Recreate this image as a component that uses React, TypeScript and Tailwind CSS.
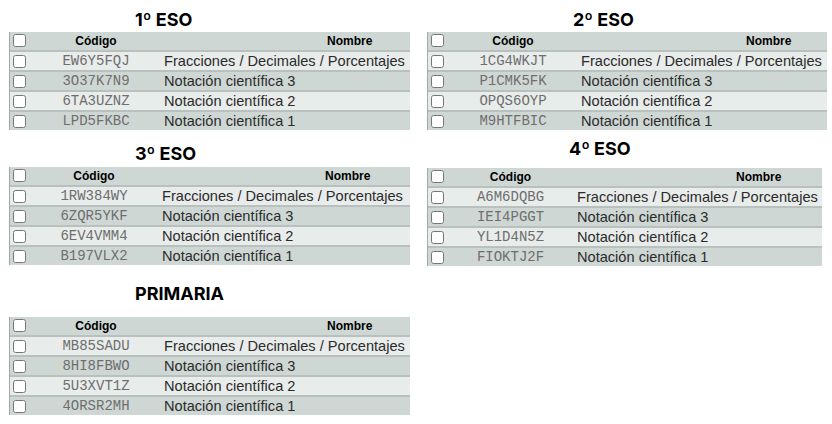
import React from 'react';

interface Row {
    code: string;
    name: string;
}

interface TableSpec {
    title: string;
    titleClass: string;
    wrapClass: string;
    tableClass: string;
    widthClass: string;
    codeClass: string;
    nombreClass: string;
    rows: Row[];
}

const names = ['Fracciones / Decimales / Porcentajes', 'Notación científica 3', 'Notación científica 2', 'Notación científica 1'];

const mk = (codes: string[]): Row[] => codes.map((code, i) => ({ code, name: names[i] }));

const Check: React.FC = () => (
    <input type="checkbox" className="m-0 ml-[3px] h-[13px] w-[13px] shrink-0" />
);

const CodeTable: React.FC<{ t: TableSpec }> = ({ t }) => (
    <div className={t.wrapClass}>
        <h2 className={`h-[22px] text-[18px] leading-[22px] font-bold text-black font-['Inter',sans-serif] ${t.titleClass}`}>
            {t.title}
        </h2>
        <div className={`${t.tableClass} ${t.widthClass} border-l border-[#a3aba9] font-['Liberation_Sans',Arial,sans-serif]`}>
            <div className="flex h-[18px] items-start bg-[#ced7d4] pt-[2px]">
                <Check />
                <div className={`${t.codeClass} shrink-0 text-center text-[12px] font-bold leading-[14px] text-black`}>Código</div>
                <div className={`${t.nombreClass} text-[12px] font-bold leading-[14px] text-black`}>Nombre</div>
            </div>
            {t.rows.map((r, i) => (
                <div
                    key={i}
                    className={`flex h-[20px] items-center border-t-2 border-[#b9c1bf] ${i % 2 === 0 ? 'bg-[#e8ecea]' : 'bg-[#ced7d4]'}`}
                >
                    <Check />
                    <div className={`${t.codeClass} shrink-0 text-center font-['Liberation_Mono','Courier_New',monospace] text-[14px] leading-[18px] text-[#6e6e6e]`}>
                        {r.code}
                    </div>
                    <div className="text-[14.6px] leading-[18px] whitespace-nowrap text-[#2b2b2b]">{r.name}</div>
                </div>
            ))}
        </div>
    </div>
);

const tables: Record<string, TableSpec> = {
    t1: {
        title: '1º ESO', titleClass: 'pl-[126px]', wrapClass: '', tableClass: 'mt-[1px]', widthClass: 'w-[401px]',
        codeClass: 'w-[138px] pl-[2px]', nombreClass: 'pl-[163px]', rows: mk(['EW6Y5FQJ', '3O37K7N9', '6TA3UZNZ', 'LPD5FKBC']),
    },
    t2: {
        title: '2º ESO', titleClass: 'pl-[146px]', wrapClass: '', tableClass: 'mt-[1px]', widthClass: 'w-[400px]',
        codeClass: 'w-[137px] pl-[1px]', nombreClass: 'pl-[165px]', rows: mk(['1CG4WKJT', 'P1CMK5FK', 'OPQS6OYP', 'M9HTFBIC']),
    },
    t3: {
        title: '3º ESO', titleClass: 'pl-[126px]', wrapClass: 'mt-[13px]', tableClass: 'mt-[2px]', widthClass: 'w-[401px]',
        codeClass: 'w-[136px]', nombreClass: 'pl-[163px]', rows: mk(['1RW384WY', '6ZQR5YKF', '6EV4VMM4', 'B197VLX2']),
    },
    t4: {
        title: '4º ESO', titleClass: 'pl-[142px]', wrapClass: 'mt-[8px]', tableClass: 'mt-[8px]', widthClass: 'w-[395px]',
        codeClass: 'w-[133px]', nombreClass: 'pl-[159px]', rows: mk(['A6M6DQBG', 'IEI4PGGT', 'YL1D4N5Z', 'FIOKTJ2F']),
    },
    t5: {
        title: 'PRIMARIA', titleClass: 'pl-[126px]', wrapClass: 'mt-[18px]', tableClass: 'mt-[12px]', widthClass: 'w-[401px]',
        codeClass: 'w-[138px] pl-[2px]', nombreClass: 'pl-[163px]', rows: mk(['MB85SADU', '8HI8FBWO', '5U3XVT1Z', '4ORSR2MH']),
    },
};

export default function App() {
    return (
        <div className="flex h-[424px] w-[832px] gap-[17px] bg-white pt-[9px] pl-[9px]">
            <div className="flex flex-col">
                <CodeTable t={tables.t1} />
                <CodeTable t={tables.t3} />
                <CodeTable t={tables.t5} />
            </div>
            <div className="flex flex-col">
                <CodeTable t={tables.t2} />
                <CodeTable t={tables.t4} />
            </div>
        </div>
    );
}
